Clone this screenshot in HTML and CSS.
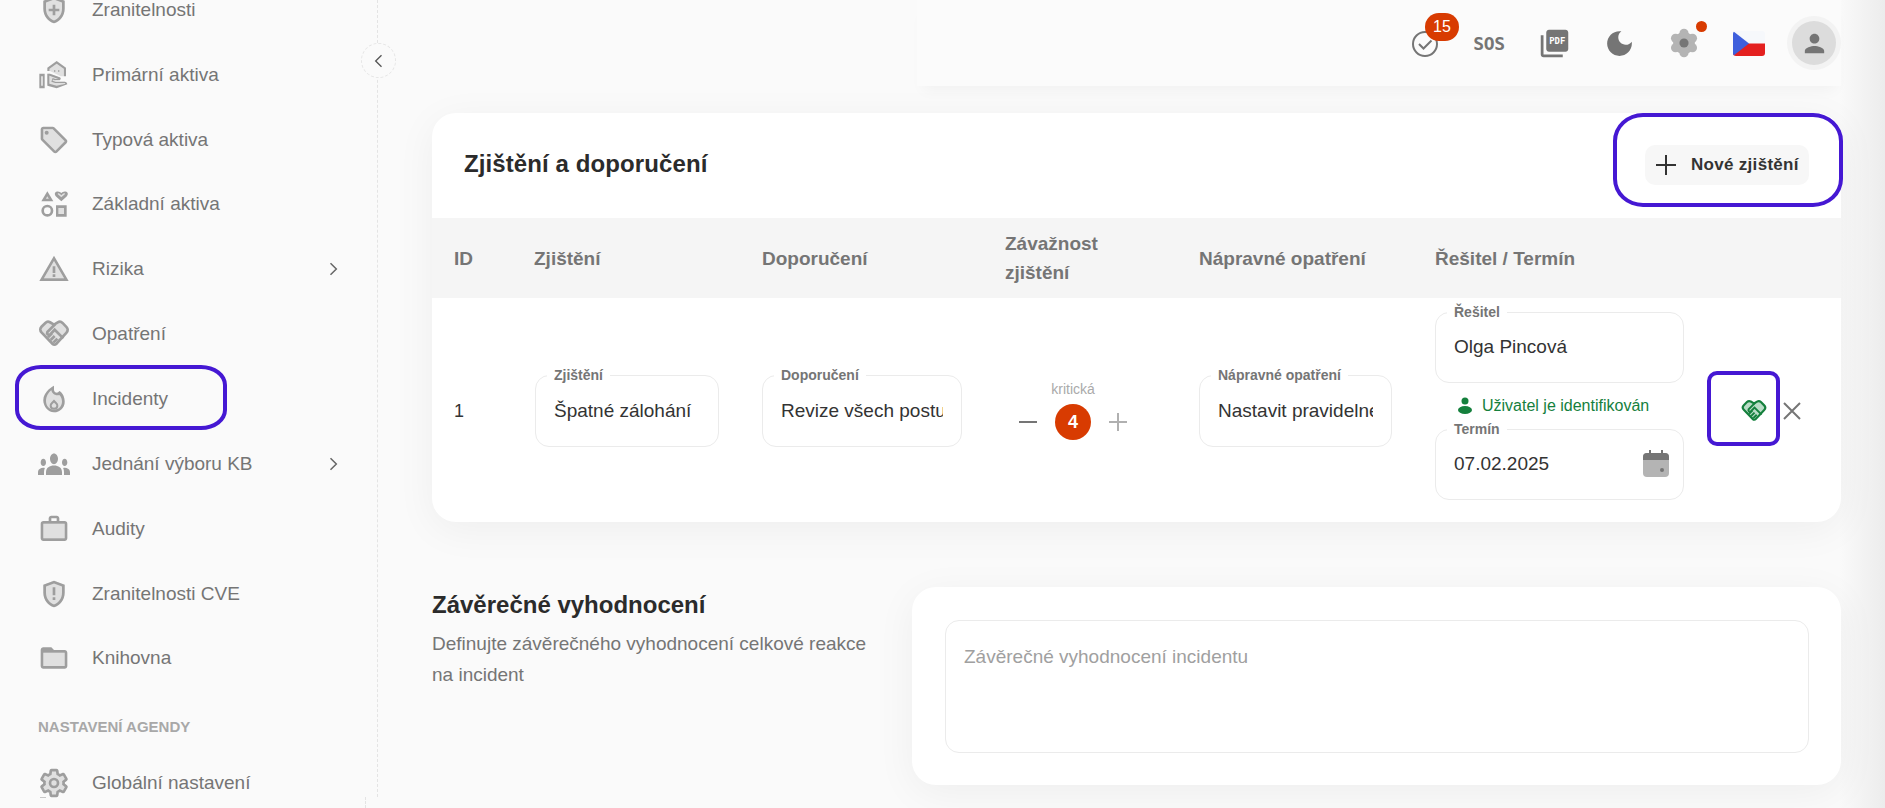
FILE: index.html
```html
<!DOCTYPE html>
<html lang="cs">
<head>
  <meta charset="UTF-8">
  <title>Incidenty</title>
  <link rel="stylesheet" href="styles.css">
</head>
<body>
  <!-- Sidebar -->
  <aside class="sidebar">
    <button class="collapse-btn"><svg viewBox="0 0 24 24" width="20" height="20"><path d="M15 5l-7 7 7 7" fill="none" stroke="#555" stroke-width="1.6"/></svg></button>
    <nav class="nav">
      <a class="nav-item"><svg class="nav-icon" viewBox="0 0 24 24"><path class="tone" d="M12 2L4 5v6.09c0 5.05 3.41 9.76 8 10.91 4.59-1.15 8-5.86 8-10.91V5z"/><path class="solid" d="M12 2L4 5v6.09c0 5.05 3.41 9.76 8 10.91 4.59-1.15 8-5.86 8-10.91V5l-8-3zm6 9.09c0 4-2.55 7.7-6 8.83-3.45-1.13-6-4.82-6-8.83V6.39l6-2.25 6 2.25v4.7zM13 8h-2v3H8v2h3v3h2v-3h3v-2h-3z"/></svg><span>Zranitelnosti</span></a>
      <a class="nav-item"><svg class="nav-icon" viewBox="0 0 24 24"><path class="tone" d="M14 3.5l5 3.5v6h-2l-8-4V7z"/><path class="tone" d="M7 11h2l8 3v1h-4v2h7l1 1-7 3-7-2z"/><path class="solid" d="M1 22h4V11H1v11zm2-2H2.500v-7H3.500v7zM20 17h-7l-2.090-.73.33-.94L13 16h2.820c.65 0 1.180-.53 1.180-1.180 0-.49-.31-.93-.77-1.110L8.970 11H7v9.020L14 22l8-3c-.01-1.100-.89-2-2-2zm-6 3l-5.500-1.500v-6h.2l6.500 2.500H13l-2-.7-1 2.800L13 18h7l.5.5z"/><path class="solid" d="M14 1.500l-7 5V9h1.700V7.300L14 3.600l5.300 3.700V13H21V6.500l-7-5zm-1 7h-1v1h1zm3 0h-1v1h1z"/></svg><span>Primární aktiva</span></a>
      <a class="nav-item"><svg class="nav-icon" viewBox="0 0 24 24"><path class="tone" d="M11 4H4v7l9 9.01L20 13l-9-9z"/><path class="solid" d="M21.41 11.58l-9-9C12.05 2.22 11.55 2 11 2H4c-1.1 0-2 .9-2 2v7c0 .55.22 1.05.59 1.42l9 9c.36.36.86.58 1.41.58s1.05-.22 1.41-.59l7-7c.37-.36.59-.86.59-1.41s-.23-1.06-.59-1.42zM13 20.01L4 11V4h7v-.01l9 9-7 7.02z"/><circle class="solid" cx="6.5" cy="6.5" r="1.5"/></svg><span>Typová aktiva</span></a>
      <a class="nav-item"><svg class="nav-icon" viewBox="0 0 24 24"><path class="solid" d="M7 2.500l4.500 7.500h-9z"/><path class="tone" d="M7 6.100L5.900 8h2.200z"/><path class="solid" d="M17.500 10l-4-3.700C12.300 5.200 12.100 3 14.400 2.600c1.300-.2 2.400.4 3.100 1.200.7-.8 1.800-1.400 3.100-1.200 2.300.4 2.100 2.600.9 3.700z"/><path class="tone" d="M17.500 7l2.600-2.300c.5-.5-.6-1.200-1.400-.3l-1.200 1.100-1.200-1.100c-.8-.9-1.900-.2-1.400.3z"/><path class="solid" d="M7 12.500a4.500 4.500 0 1 1 0 9 4.500 4.500 0 0 1 0-9zm0 2a2.500 2.500 0 1 0 0 5 2.500 2.500 0 0 0 0-5zM13.500 13h8v8.500h-8zm2 2v4.500h4V15z"/><path class="tone" d="M15.500 15h4v4.500h-4z"/></svg><span>Základní aktiva</span></a>
      <a class="nav-item"><svg class="nav-icon" viewBox="0 0 24 24"><path class="tone" d="M4.47 19h15.06L12 5.99z"/><path class="solid" d="M1 21h22L12 2 1 21zm3.470-2L12 5.990 19.530 19H4.470zM13 16h-2v2h2zM13 10h-2v5h2z"/></svg><span>Rizika</span><svg class="nav-arrow" viewBox="0 0 24 24"><path d="M9 5l7 7-7 7" fill="none" stroke="#666" stroke-width="1.800"/></svg></a>
      <a class="nav-item"><svg class="nav-icon" viewBox="0 0 24 24"><path class="tone shake" d="M12 5L9 3.200a3 3 0 0 0-3.500.5L2.600 6.600a3 3 0 0 0 0 4.200l8.400 8.700a1.800 1.800 0 0 0 2.600 0l7.800-8.500a3 3 0 0 0 0-4.200l-3-3.100a3 3 0 0 0-3.600-.4z"/><path class="shake" d="M13 4.500L7 10.500a1.500 1.500 0 0 0 2 2l3.500-3.700 6.500 6.500M7.500 14.500l3-3M9.500 16.500l3-3M11.500 18.500l3-3"/></svg><span>Opatření</span></a>
      <a class="nav-item"><svg class="nav-icon" viewBox="0 0 24 24"><path class="tone" d="M16 6l-.44.55C14.380 8.020 12 7.190 12 5.300V2S4 6 4 13c0 4.420 3.580 9 8 9s8-3.580 8-8c0-3.500-1.500-6.500-4-8z"/><path class="solid" d="M16 6l-.44.55C14.380 8.020 12 7.190 12 5.300V2S4 6 4 13c0 4.420 3.580 9 8 9s8-3.580 8-8c0-3.500-1.500-6.500-4-8zm-4 14c-3.310 0-6-2.690-6-6.500 0-3.500 2-6.500 4-8 .5 2.500 3 4.500 6 3.500 1.500 1.500 2 3.500 2 5 0 3.310-2.690 6-6 6z"/><path class="drop" d="M12 13.500l-1.800 1.900c-.5.5-.7 1-.7 1.600 0 1.300 1.100 2.300 2.500 2.300s2.500-1 2.500-2.300c0-.6-.2-1.100-.7-1.600z"/></svg><span>Incidenty</span></a>
      <a class="nav-item"><svg class="nav-icon" viewBox="0 0 24 24"><g transform="translate(0 -4) scale(1 1.350)"><path class="solid" d="M12 12.750c1.630 0 3.070.39 4.240.9 1.080.48 1.760 1.560 1.760 2.730V18H6v-1.610c0-1.180.68-2.260 1.760-2.740 1.170-.52 2.610-.9 4.240-.9zM4 13c1.100 0 2-.9 2-2s-.9-2-2-2-2 .9-2 2 .9 2 2 2zm1.130 1.100c-.37-.06-.74-.1-1.130-.1-.99 0-1.930.21-2.780.58C.48 14.900 0 15.620 0 16.430V18h4.500v-1.610c0-.83.23-1.610.63-2.290zM20 13c1.100 0 2-.9 2-2s-.9-2-2-2-2 .9-2 2 .9 2 2 2zm4 3.430c0-.81-.48-1.530-1.220-1.850-.85-.37-1.790-.58-2.780-.58-.39 0-.76.04-1.130.1.4.68.63 1.460.63 2.290V18H24v-1.570zM12 6c1.660 0 3 1.340 3 3s-1.340 3-3 3-3-1.340-3-3 1.340-3 3-3z"/></g></svg><span>Jednání výboru KB</span><svg class="nav-arrow" viewBox="0 0 24 24"><path d="M9 5l7 7-7 7" fill="none" stroke="#666" stroke-width="1.800"/></svg></a>
      <a class="nav-item"><svg class="nav-icon" viewBox="0 0 24 24"><path class="tone" d="M4 8h16v11H4z"/><path class="solid" d="M20 6h-4V4c0-1.110-.89-2-2-2h-4c-1.110 0-2 .89-2 2v2H4c-1.110 0-1.990.89-1.990 2L2 19c0 1.110.89 2 2 2h16c1.110 0 2-.89 2-2V8c0-1.110-.89-2-2-2zM10 4h4v2h-4V4zm10 15H4V8h16v11z"/></svg><span>Audity</span></a>
      <a class="nav-item"><svg class="nav-icon" viewBox="0 0 24 24"><path class="tone" d="M12 2L4 5v6.090c0 5.050 3.410 9.760 8 10.910 4.590-1.150 8-5.860 8-10.910V5z"/><path class="solid" d="M12 2L4 5v6.090c0 5.050 3.410 9.760 8 10.910 4.590-1.150 8-5.860 8-10.910V5l-8-3zm6 9.090c0 4-2.550 7.700-6 8.830-3.450-1.130-6-4.820-6-8.830V6.390l6-2.250 6 2.250v4.700zM11 7h2v6h-2zm0 7.500h2v2h-2z"/></svg><span>Zranitelnosti CVE</span></a>
      <a class="nav-item"><svg class="nav-icon" viewBox="0 0 24 24"><path class="tone" d="M4 8h16v10H4z"/><path class="solid" d="M20 6h-8l-2-2H4c-1.100 0-1.990.9-1.990 2L2 18c0 1.100.9 2 2 2h16c1.100 0 2-.9 2-2V8c0-1.100-.9-2-2-2zm0 12H4V8h16v10z"/></svg><span>Knihovna</span></a>
      <div class="nav-section">NASTAVENÍ AGENDY</div>
      <a class="nav-item"><svg class="nav-icon" viewBox="0 0 24 24"><path class="tone" d="M19.140 12.940c.04-.3.06-.61.06-.94 0-.32-.02-.64-.07-.94l2.030-1.580c.18-.14.23-.41.12-.61l-1.920-3.320c-.12-.22-.37-.29-.59-.22l-2.390.96c-.5-.38-1.030-.7-1.620-.94l-.36-2.540c-.04-.24-.24-.41-.48-.41h-3.840c-.24 0-.43.17-.47.41l-.36 2.540c-.59.24-1.130.57-1.620.94l-2.390-.96c-.22-.08-.47 0-.59.22L2.740 8.870c-.12.21-.08.47.12.61l2.030 1.580c-.05.3-.09.63-.09.94s.02.64.07.94l-2.030 1.580c-.18.14-.23.41-.12.61l1.920 3.320c.12.22.37.29.59.22l2.390-.96c.5.38 1.030.7 1.620.94l.36 2.540c.05.24.24.41.48.41h3.840c.24 0 .44-.17.47-.41l.36-2.540c.59-.24 1.130-.56 1.620-.94l2.390.96c.22.08.47 0 .59-.22l1.920-3.320c.12-.22.07-.47-.12-.61l-2.010-1.580z" stroke="#9e9e9e" stroke-width="2"/><circle cx="12" cy="12" r="3" fill="none" stroke="#9e9e9e" stroke-width="2"/></svg><span>Globální nastavení</span></a>
    </nav>
  </aside>

  <main class="main">
    <!-- Top bar -->
    <header class="topbar">
      <div class="top-slot check-slot">
        <svg viewBox="0 0 28 28" width="28" height="28"><circle cx="14" cy="14" r="12" fill="none" stroke="#757575" stroke-width="2"/><path d="M8 14l4.500 4.500 8-8" fill="none" stroke="#757575" stroke-width="2"/></svg>
        <span class="count-badge">15</span>
      </div>
      <div class="top-slot"><span class="sos">SOS</span></div>
      <div class="top-slot">
        <svg viewBox="0 0 24 24" width="33" height="33"><path d="M20 2H8c-1.100 0-2 .9-2 2v12c0 1.100.9 2 2 2h12c1.100 0 2-.9 2-2V4c0-1.100-.9-2-2-2zM4 6H2v14c0 1.100.9 2 2 2h14v-2H4V6z" fill="#757575"/><text x="14" y="12" class="pdf-text">PDF</text></svg>
      </div>
      <div class="top-slot">
        <svg viewBox="0 0 24 24" width="33" height="33"><path d="M12 3c-4.970 0-9 4.030-9 9s4.030 9 9 9 9-4.030 9-9c0-.46-.04-.92-.1-1.360-.98 1.370-2.580 2.260-4.400 2.260-2.980 0-5.400-2.420-5.400-5.400 0-1.810.89-3.420 2.260-4.400-.44-.06-.9-.1-1.360-.1z" fill="#757575"/></svg>
      </div>
      <div class="top-slot gear-slot">
        <svg viewBox="0 0 28 28" width="32" height="32"><g fill="#b4b4b4"><circle cx="14" cy="14" r="9.500"/><circle cx="14" cy="5.500" r="4"/><circle cx="14" cy="22.500" r="4"/><circle cx="6.600" cy="9.800" r="4"/><circle cx="21.400" cy="9.800" r="4"/><circle cx="6.600" cy="18.200" r="4"/><circle cx="21.400" cy="18.200" r="4"/></g><circle cx="14" cy="14" r="4" fill="#757575"/></svg>
        <span class="gear-dot"></span>
      </div>
      <div class="top-slot">
        <svg viewBox="0 0 32 25" width="32" height="25"><clipPath id="flag-clip"><rect width="32" height="25" rx="3"/></clipPath><g clip-path="url(#flag-clip)"><rect width="32" height="12.500" fill="#f6f8fb"/><rect y="12.500" width="32" height="12.500" fill="#e4201f"/><path d="M0 0l16 12.500L0 25z" fill="#3f5fdc"/></g></svg>
      </div>
      <div class="top-slot">
        <div class="avatar"><svg viewBox="0 0 24 24" width="29" height="29"><path d="M12 12c2.210 0 4-1.790 4-4s-1.790-4-4-4-4 1.790-4 4 1.790 4 4 4zm0 2c-2.670 0-8 1.340-8 4v2h16v-2c0-2.660-5.330-4-8-4z" fill="#757575"/></svg></div>
      </div>
    </header>

    <!-- Findings table -->
    <section class="card findings">
      <div class="card-head">
        <h2>Zjištění a doporučení</h2>
        <button class="add-btn"><svg viewBox="0 0 24 24" width="24" height="24"><path d="M12 2v20M2 12h20" fill="none" stroke="#333" stroke-width="2"/></svg>Nové zjištění</button>
      </div>
      <div class="grid-row grid-head">
        <div>ID</div>
        <div>Zjištění</div>
        <div>Doporučení</div>
        <div>Závažnost zjištění</div>
        <div>Nápravné opatření</div>
        <div>Řešitel / Termín</div>
      </div>
      <div class="grid-row grid-body">
        <div>1</div>
        <div class="field w-find"><label>Zjištění</label><div class="field-val">Špatné zálohání</div></div>
        <div class="field w-rec"><label>Doporučení</label><div class="field-val">Revize všech postupů</div></div>
        <div class="severity">
          <div class="severity-name">kritická</div>
          <div class="stepper">
            <svg viewBox="0 0 18 18" width="18" height="18"><path d="M0 9h18" stroke="#757575" stroke-width="2"/></svg>
            <span class="severity-num">4</span>
            <svg viewBox="0 0 18 18" width="18" height="18"><path d="M0 9h18M9 0v18" stroke="#b0b0b0" stroke-width="2"/></svg>
          </div>
        </div>
        <div class="field w-fix"><label>Nápravné opatření</label><div class="field-val">Nastavit pravidelné zálohování</div></div>
        <div class="owner-cell">
          <div class="owner-stack">
            <div class="field"><label>Řešitel</label><div class="field-val">Olga Pincová</div></div>
            <div class="identified"><svg viewBox="0 0 16 18" width="16" height="18"><circle cx="8" cy="4" r="3.500" fill="#15803d"/><ellipse cx="8" cy="13" rx="7" ry="4" fill="#15803d"/></svg>Uživatel je identifikován</div>
            <div class="field"><label>Termín</label><div class="field-val">07.02.2025</div>
              <svg class="cal-icon" viewBox="0 0 28 28" width="28" height="28"><rect x="1" y="3" width="26" height="24" rx="4" fill="#b4b4b4"/><path d="M1 10V7a4 4 0 0 1 4-4h18a4 4 0 0 1 4 4v3z" fill="#757575"/><rect x="7" y="0" width="2" height="5" fill="#757575"/><rect x="19" y="0" width="2" height="5" fill="#757575"/><circle cx="20" cy="20" r="2" fill="#757575"/></svg>
            </div>
          </div>
          <div class="row-actions">
            <svg viewBox="0 0 24 24" width="26" height="26"><path d="M12 5L9 3.200a3 3 0 0 0-3.500.5L2.600 6.600a3 3 0 0 0 0 4.200l8.400 8.700a1.800 1.800 0 0 0 2.600 0l7.800-8.500a3 3 0 0 0 0-4.200l-3-3.100a3 3 0 0 0-3.600-.4z" fill="#b9dcc6" stroke="#15803d" stroke-width="2"/><path d="M13 4.500L7 10.500a1.500 1.500 0 0 0 2 2l3.500-3.700 6.500 6.500M7.500 14.500l3-3M9.500 16.500l3-3M11.500 18.500l3-3" fill="none" stroke="#15803d" stroke-width="1.800"/></svg>
            <svg viewBox="0 0 18 18" width="18" height="18"><path d="M1 1l16 16M17 1L1 17" fill="none" stroke="#757575" stroke-width="2"/></svg>
          </div>
        </div>
      </div>
    </section>

    <!-- Final evaluation -->
    <section class="final">
      <div class="final-text">
        <h3>Závěrečné vyhodnocení</h3>
        <p>Definujte závěrečného vyhodnocení celkové reakce na incident</p>
      </div>
      <div class="card final-card">
        <div class="final-area">Závěrečné vyhodnocení incidentu</div>
      </div>
    </section>
  </main>

  <!-- Hand drawn marks on top of the screenshot -->
  <div class="mark mark-nav"></div>
  <div class="mark mark-add"></div>
  <div class="mark mark-hand"></div>
</body>
</html>
```

FILE: styles.css
```css
* {
  box-sizing: border-box;
}

html, body {
  margin: 0;
  height: 100%;
  overflow: hidden;
}

body {
  display: flex;
  background: #fafafa;
  font-family: "Liberation Sans", Arial, sans-serif;
  color: #333;
}

/* Sidebar */
.sidebar {
  position: relative;
  flex: 0 0 378px;
  height: 797px;
  border-right: 1px dashed #e4e4e4;
}

/* Bits of the sidebar footer that peek out at the bottom */
.sidebar::before {
  content: "";
  position: absolute;
  left: 40px;
  top: 797px;
  width: 6px;
  height: 1px;
  background: #c8c8c8;
}

.sidebar::after {
  content: "";
  position: absolute;
  right: 11px;
  top: 797px;
  height: 11px;
  border-right: 1px dashed #e4e4e4;
}

.collapse-btn {
  position: absolute;
  top: 43px;
  right: -19px;
  width: 35px;
  height: 35px;
  padding: 0;
  display: flex;
  align-items: center;
  justify-content: center;
  background: #fafafa;
  border: 1px dashed #e6e6e6;
  border-radius: 50%;
}

.nav {
  margin-top: -22.5px;
}

.nav-item {
  display: flex;
  align-items: center;
  height: 64.85px;
  padding-left: 38px;
  font-size: 19px;
  color: #757575;
}

.nav-icon {
  flex: 0 0 32px;
  width: 32px;
  height: 32px;
  margin-right: 22px;
}

.nav-arrow {
  width: 20px;
  height: 20px;
  margin-left: auto;
  margin-right: 34px;
}

.tone {
  fill: #e0e0e0;
}

.solid {
  fill: #9e9e9e;
}

.shake {
  fill: none;
  stroke: #9e9e9e;
  stroke-width: 2;
}

.tone.shake {
  fill: #e0e0e0;
}

.drop {
  fill: #e0e0e0;
  stroke: #9e9e9e;
  stroke-width: 1.5;
}

.nav-section {
  height: 60px;
  padding: 27px 0 0 38px;
  font-size: 15px;
  font-weight: bold;
  color: #a8a8a8;
}

/* Main column */
.main {
  flex: 1;
  min-width: 0;
  padding: 0 44px 0 54px;
  background: linear-gradient(270deg, #ececec 0, #fafafa 46px);
}

.topbar {
  display: flex;
  justify-content: flex-end;
  gap: 11px;
  height: 86px;
  margin-left: 485px;
  padding-top: 16px;
  background: #fbfbfb;
  box-shadow: 0 10px 14px -6px rgba(0, 0, 0, 0.04);
}

.top-slot {
  position: relative;
  width: 54px;
  height: 54px;
  display: flex;
  align-items: center;
  justify-content: center;
}

.check-slot svg {
  margin-left: 2px;
  margin-top: 1px;
}

.count-badge {
  position: absolute;
  top: -3px;
  left: 28px;
  width: 34px;
  height: 28px;
  border-radius: 14px;
  background: #d83b01;
  color: #fff;
  font-size: 16px;
  line-height: 28px;
  text-align: center;
}

.sos {
  font-family: "DejaVu Sans Mono", monospace;
  font-weight: bold;
  font-size: 18px;
  letter-spacing: -0.4px;
  color: #757575;
}

.pdf-text {
  font-family: "DejaVu Sans Mono", monospace;
  font-size: 6.5px;
  font-weight: bold;
  fill: #fff;
  text-anchor: middle;
}

.gear-dot {
  position: absolute;
  top: 5px;
  right: 4px;
  width: 11px;
  height: 11px;
  border-radius: 50%;
  background: #d83b01;
}

.avatar {
  flex: none;
  width: 44px;
  height: 44px;
  border-radius: 50%;
  background: #dcdcdc;
  box-shadow: 0 0 0 5px #f3f3f3;
  display: flex;
  align-items: center;
  justify-content: center;
}

/* Cards */
.card {
  background: #fff;
  border-radius: 24px;
  box-shadow: 0 8px 40px rgba(0, 0, 0, 0.05);
}

.findings {
  margin-top: 27px;
  overflow: hidden;
}

.card-head {
  display: flex;
  align-items: center;
  justify-content: space-between;
  height: 105px;
  padding: 0 32px 2px;
}

.card-head h2 {
  margin: 0 0 2px;
  font-size: 24px;
  letter-spacing: 0.1px;
  color: #2b2b2b;
}

.add-btn {
  display: flex;
  align-items: center;
  gap: 13px;
  width: 164px;
  height: 40px;
  padding: 0 0 0 9px;
  border: none;
  border-radius: 10px;
  background: #f7f7f7;
  font: bold 17px "Liberation Sans", Arial, sans-serif;
  letter-spacing: 0.3px;
  color: #333;
}

.grid-row {
  display: grid;
  grid-template-columns: 80px 228px 243px 194px 236px 1fr;
  align-items: center;
  padding: 0 22px;
}

.grid-head {
  height: 80px;
  background: #f5f5f5;
  font-size: 19px;
  font-weight: bold;
  line-height: 29px;
  color: #757575;
}

.grid-head div:nth-child(4) {
  width: 110px;
}

.grid-body {
  height: 224px;
  padding-top: 2px;
  font-size: 18px;
}

/* Outlined fields */
.field {
  position: relative;
  height: 72px;
  padding: 0 18px;
  display: flex;
  align-items: center;
  border: 1px solid #ebebeb;
  border-radius: 14px;
  background: #fff;
}

.field label {
  position: absolute;
  top: -9px;
  left: 11px;
  padding: 0 7px;
  background: #fff;
  font-size: 14px;
  line-height: 16px;
  font-weight: bold;
  color: #757575;
}

.field-val {
  overflow: hidden;
  white-space: nowrap;
  width: 100%;
  font-size: 19px;
  color: #333;
}

.w-find {
  width: 184px;
  margin-left: 1px;
}

.w-rec {
  width: 200px;
}

.w-fix {
  width: 193px;
}

/* Severity */
.severity {
  width: 136px;
  padding-bottom: 1px;
  text-align: center;
}

.severity-name {
  font-size: 14px;
  color: #aaa;
  margin-bottom: 7px;
}

.stepper {
  display: flex;
  align-items: center;
  justify-content: space-between;
  padding: 0 14px;
}

.severity-num {
  width: 36px;
  height: 36px;
  border-radius: 50%;
  background: #d83b01;
  color: #fff;
  font-weight: bold;
  font-size: 18px;
  line-height: 36px;
}

/* Owner and deadline */
.owner-cell {
  display: flex;
  align-items: center;
}

.owner-stack {
  width: 249px;
  flex: none;
  margin-bottom: 11px;
}

.owner-stack .field {
  height: 71px;
}

.identified {
  display: flex;
  align-items: center;
  gap: 9px;
  height: 46px;
  padding: 0 0 0 22px;
  font-size: 16px;
  color: #15803d;
}

.cal-icon {
  flex: none;
  margin-right: -5px;
}

.row-actions {
  display: flex;
  align-items: center;
  gap: 16px;
  margin-left: 57px;
}

/* Final evaluation */
.final {
  display: grid;
  grid-template-columns: 480px 929px;
  margin-top: 65px;
}

.final-text h3 {
  margin: 4px 0 0;
  font-size: 24px;
  color: #2b2b2b;
}

.final-text p {
  margin: 9px 0 0;
  max-width: 440px;
  font-size: 19px;
  line-height: 31px;
  color: #757575;
}

.final-card {
  height: 198px;
  padding: 33px 32px 32px 33px;
}

.final-area {
  height: 100%;
  padding: 25px 18px;
  border: 1px solid #ebebeb;
  border-radius: 14px;
  font-size: 19px;
  color: #a0a0a0;
}

/* Purple marks */
.mark {
  position: absolute;
  border: 4px solid #4518d3;
}

.mark-nav {
  left: 15px;
  top: 365px;
  width: 212px;
  height: 65px;
  border-radius: 26px / 20px;
}

.mark-add {
  left: 1613px;
  top: 113px;
  width: 230px;
  height: 94px;
  border-radius: 30px / 28px;
}

.mark-hand {
  left: 1707px;
  top: 371px;
  width: 73px;
  height: 75px;
  border-radius: 10px;
}
```
